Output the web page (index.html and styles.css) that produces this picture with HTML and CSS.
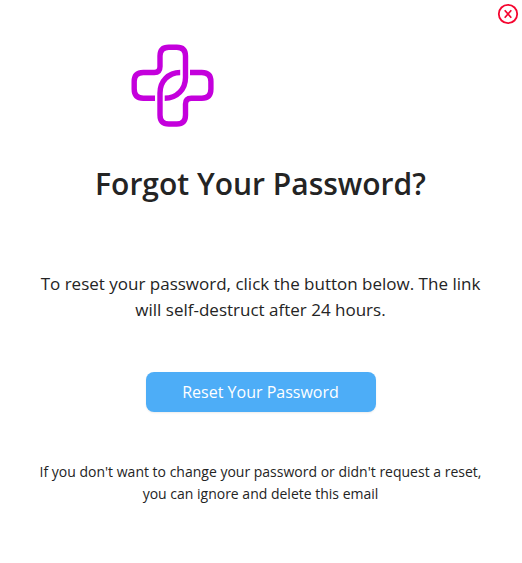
FILE: index.html
```html
<!DOCTYPE html>
<html lang="en">
<head>
<meta charset="utf-8">
<title>Forgot Your Password</title>
<link rel="stylesheet" href="styles.css">
</head>
<body>
<main class="dialog">
<button class="close" aria-label="Close"><svg width="22" height="22" viewBox="0 0 22 22" fill="none" stroke="#f5052f"><circle cx="11" cy="11" r="9.2" stroke-width="1.8"/><path d="M7.7 7.2l6.600 7.600M14.300 7.200l-6.600 7.600" stroke-width="1.7"/></svg></button>
<svg class="logo" width="84" height="84" viewBox="0 0 84 84" fill="none" stroke="#c400dc" stroke-width="5.400"><path d="M24 55.200H12.300Q3.200 55.200 3.200 46V38.500Q3.200 29.500 12.300 29.500H23.300Q29 29.500 29 23.500V13Q29 4.200 37.800 4.200H45.800Q54.500 4.200 54.500 13V34.500C54.500 46 46.300 55.200 33.700 55.200"/><path d="M49.200 29.500C37.300 29.500 29 38.500 29 50V72Q29 81 37.800 81H45.800Q54.500 81 54.500 72V61Q54.500 55.200 60.300 55.200H70.800Q79.900 55.200 79.900 46V38.500Q79.900 29.500 70.800 29.500H59"/></svg>
<h1 class="title">Forgot Your Password?</h1>
<p class="message">To reset your password, click the button below. The link<br>will self-destruct after 24 hours.</p>
<button class="reset">Reset Your Password</button>
<p class="note">If you don't want to change your password or didn't request a reset,<br>you can ignore and delete this email</p>
</main>
</body>
</html>
```
FILE: styles.css
```css
body { margin: 0; background: #fff; color: #242424; font-family: "Open Sans", sans-serif; }
.dialog { position: relative; display: flex; flex-direction: column; align-items: center; padding: 43px 0 0; height: 520px; overflow: hidden; }
.close { position: absolute; top: 3px; right: 3px; width: 22px; height: 22px; padding: 0; border: 0; background: none; }
.close svg, .logo { display: block; }
.logo { align-self: flex-start; margin-left: 131px; flex: none; }
.title { margin: 37px 0 0; padding-right: 1px; font-size: 30px; line-height: 40px; font-weight: 600; text-align: center; }
.message { margin: 67px 0 0; padding-right: 1px; font-size: 17px; line-height: 26px; text-align: center; white-space: nowrap; }
.reset { margin-top: 49px; width: 230px; height: 40px; border: 0; border-radius: 8px; padding: 0 1px 0 0; background: #4dadf7; color: #fff; font: 16px "Open Sans", sans-serif; box-shadow: 0 1px 2px rgba(0,0,0,.08); }
.note { margin: 49px 0 0; padding-right: 1px; font-size: 14px; line-height: 22px; text-align: center; white-space: nowrap; }
```
